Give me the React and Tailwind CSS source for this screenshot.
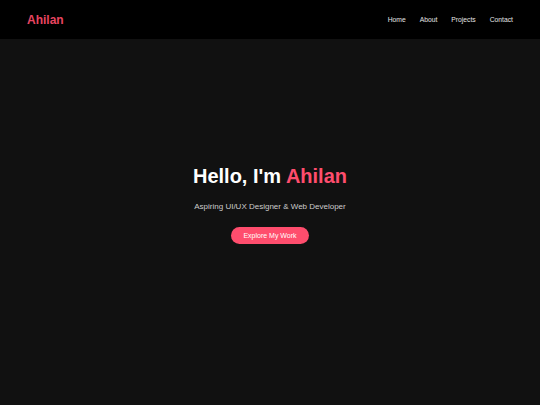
import React from "react";

export default function App() {
  return (
    <div className="min-h-[405px] bg-[#111111] font-['Liberation_Sans',Arial,sans-serif]">
      <header className="h-[39px] bg-black flex items-center justify-between px-[27px]">
        <div className="text-[12px] leading-[14px] font-bold text-[#e94560]">Ahilan</div>
        <nav className="flex items-center gap-[14px] text-[6.75px] leading-[9px] text-[#e5e5e5]">
          <a>Home</a>
          <a>About</a>
          <a>Projects</a>
          <a>Contact</a>
        </nav>
      </header>
      <section className="flex flex-col items-center pt-[125px]">
        <h1 className="text-[20px] leading-[24px] font-bold text-white">
          Hello, I'm <span className="text-[#ff4d6d]">Ahilan</span>
        </h1>
        <p className="mt-[13.5px] text-[8px] leading-[10px] text-[#cccccc]">
          Aspiring UI/UX Designer &amp; Web Developer
        </p>
        <button className="mt-[15.5px] h-[17px] w-[78px] rounded-full bg-[#ff4d6d] text-white text-[7px] leading-[9px] flex items-center justify-center">
          Explore My Work
        </button>
      </section>
    </div>
  );
}
